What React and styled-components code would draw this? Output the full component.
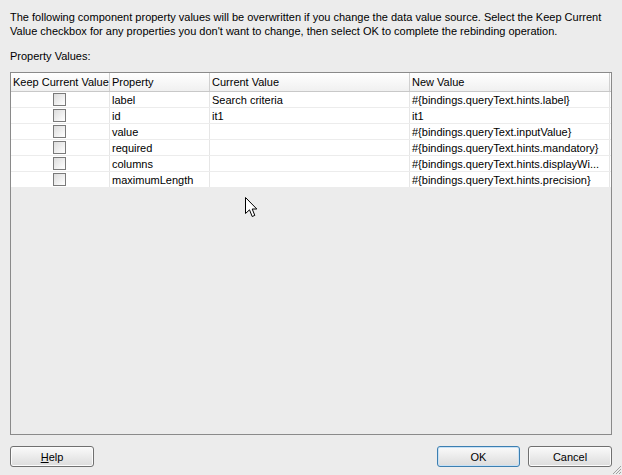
import React from 'react'
import styled, { createGlobalStyle } from 'styled-components'

const Global = createGlobalStyle`
  html, body {
    margin: 0;
    padding: 0;
    background: #ececec;
  }
  body {
    font-family: 'Liberation Sans', Arial, sans-serif;
    font-size: 11px;
    color: #000;
  }
`

const Dialog = styled.div`
  position: relative;
  width: 622px;
  height: 475px;
  box-sizing: border-box;
  padding: 10px 10px 8px 10px;
  display: flex;
  flex-direction: column;
  background: #ececec;
  overflow: hidden;
`

const Intro = styled.p`
  margin: 0;
  line-height: 14px;
  padding-right: 10px;
`

const Label = styled.div`
  margin-top: 11px;
  line-height: 14px;
`

const TableBox = styled.div`
  margin-top: 9px;
  flex: 1;
  border: 1px solid #8a8a8a;
  background: #ececec;
  display: flex;
  flex-direction: column;
`

const Row = styled.div`
  display: grid;
  grid-template-columns: 99px 100px 200px 200px;
  height: ${p => (p.$head ? '19px' : '16px')};
  background: ${p => (p.$head ? 'linear-gradient(#ffffff, #f0f0f0)' : '#ffffff')};
  border-bottom: 1px solid ${p => (p.$head ? '#c8c8c8' : '#ececec')};
  box-sizing: border-box;
`

const Cell = styled.div`
  display: flex;
  align-items: center;
  justify-content: ${p => (p.$center ? 'center' : 'flex-start')};
  padding-left: 2px;
  border-right: 1px solid ${p => (p.$head ? '#d0d0d0' : '#e6e6e6')};
  white-space: nowrap;
  overflow: hidden;
  line-height: 14px;
`

const Check = styled.span`
  display: inline-block;
  width: 13px;
  height: 13px;
  box-sizing: border-box;
  border: 1px solid #7a7a7a;
  background: linear-gradient(135deg, #dcdcdc, #ffffff);
  margin-right: 3px;
`

const Footer = styled.div`
  margin-top: 11px;
  display: flex;
  align-items: center;
`

const Spacer = styled.div`
  flex: 1;
`

const Button = styled.button`
  width: ${p => p.$w || 84}px;
  height: 21px;
  margin-left: ${p => p.$gap || 0}px;
  padding: 0;
  font-family: 'Liberation Sans', Arial, sans-serif;
  font-size: 11px;
  color: #000;
  border-radius: 3px;
  border: 1px solid ${p => (p.$focus ? '#3c7fb1' : '#707070')};
  box-shadow: ${p => (p.$focus ? 'inset 0 0 0 1px #c8e1f5' : 'inset 0 0 0 1px #fbfbfb')};
  background: linear-gradient(#fafafa, #ebebeb 50%, #dcdcdc);
`

const Mnemonic = styled.span`
  text-decoration: underline;
`

const Cursor = styled.svg`
  position: absolute;
  left: 245px;
  top: 197px;
`

const Grip = styled.svg`
  position: absolute;
  right: 0;
  bottom: 0;
`

const rows = [
  ['label', 'Search criteria', '#{bindings.queryText.hints.label}'],
  ['id', 'it1', 'it1'],
  ['value', '', '#{bindings.queryText.inputValue}'],
  ['required', '', '#{bindings.queryText.hints.mandatory}'],
  ['columns', '', '#{bindings.queryText.hints.displayWi...'],
  ['maximumLength', '', '#{bindings.queryText.hints.precision}'],
]

export default function App() {
  return (
    <Dialog>
      <Global />
      <Intro>
        The following component property values will be overwritten if you change the data value source. Select the Keep Current
        Value checkbox for any properties you don't want to change, then select OK to complete the rebinding operation.
      </Intro>
      <Label>Property Values:</Label>
      <TableBox>
        <Row $head>
          <Cell $head>Keep Current Value</Cell>
          <Cell $head>Property</Cell>
          <Cell $head>Current Value</Cell>
          <Cell $head>New Value</Cell>
        </Row>
        {rows.map(r => (
          <Row key={r[0]}>
            <Cell $center><Check /></Cell>
            <Cell>{r[0]}</Cell>
            <Cell>{r[1]}</Cell>
            <Cell>{r[2]}</Cell>
          </Row>
        ))}
      </TableBox>
      <Footer>
        <Button><Mnemonic>H</Mnemonic>elp</Button>
        <Spacer />
        <Button $focus $w={83}>OK</Button>
        <Button $gap={8}>Cancel</Button>
      </Footer>
      <Cursor width="13" height="22" viewBox="0 0 13 22">
        <path d="M0.5 0.5 L0.5 16.5 L4.5 12.8 L7.2 19.5 L9.8 18.4 L7.2 12 L11.8 12 Z" fill="#fff" stroke="#000" strokeWidth="1" />
      </Cursor>
      <Grip width="11" height="11" viewBox="0 0 11 11">
        <path d="M10 2 L2 10 M10 5 L5 10 M10 8 L8 10" stroke="#a0a0a0" strokeWidth="1" />
      </Grip>
    </Dialog>
  )
}
